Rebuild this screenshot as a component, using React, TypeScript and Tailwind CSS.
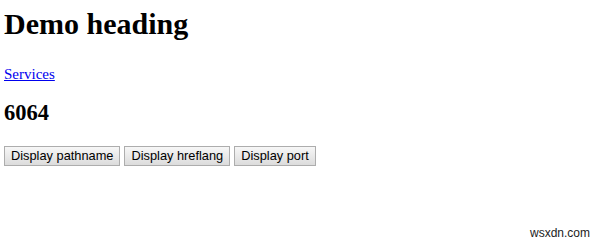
export default function App() {
  const buttons = ['Display pathname', 'Display hreflang', 'Display port'];
  return (
    <div className="relative h-[250px] w-[600px] overflow-hidden bg-white font-['Liberation_Serif',serif] text-black">
      <div className="pl-1 pt-[6px]">
        <h1 className="text-[30px] font-bold leading-[36px]">Demo heading</h1>
        <p className="mt-[23px] text-[15px] leading-[18px]">
          <a href="#" className="text-[#0000ee] underline">Services</a>
        </p>
        <h2 className="mt-[16px] text-[22.5px] font-bold leading-[27px]">6064</h2>
        <div className="mt-[20px] flex gap-1">
          {buttons.map((b) => (
            <button
              key={b}
              className="h-5 border border-[#adadad] bg-gradient-to-b from-[#f7f7f7] to-[#dcdcdc] px-[6px] font-['Liberation_Sans',sans-serif] text-[12.8px] leading-4 text-black"
            >
              {b}
            </button>
          ))}
        </div>
      </div>
      <span className="absolute bottom-[10px] right-[10px] font-['Liberation_Sans',sans-serif] text-[12px] leading-[14px] text-[#222]">
        wsxdn.com
      </span>
    </div>
  );
}
